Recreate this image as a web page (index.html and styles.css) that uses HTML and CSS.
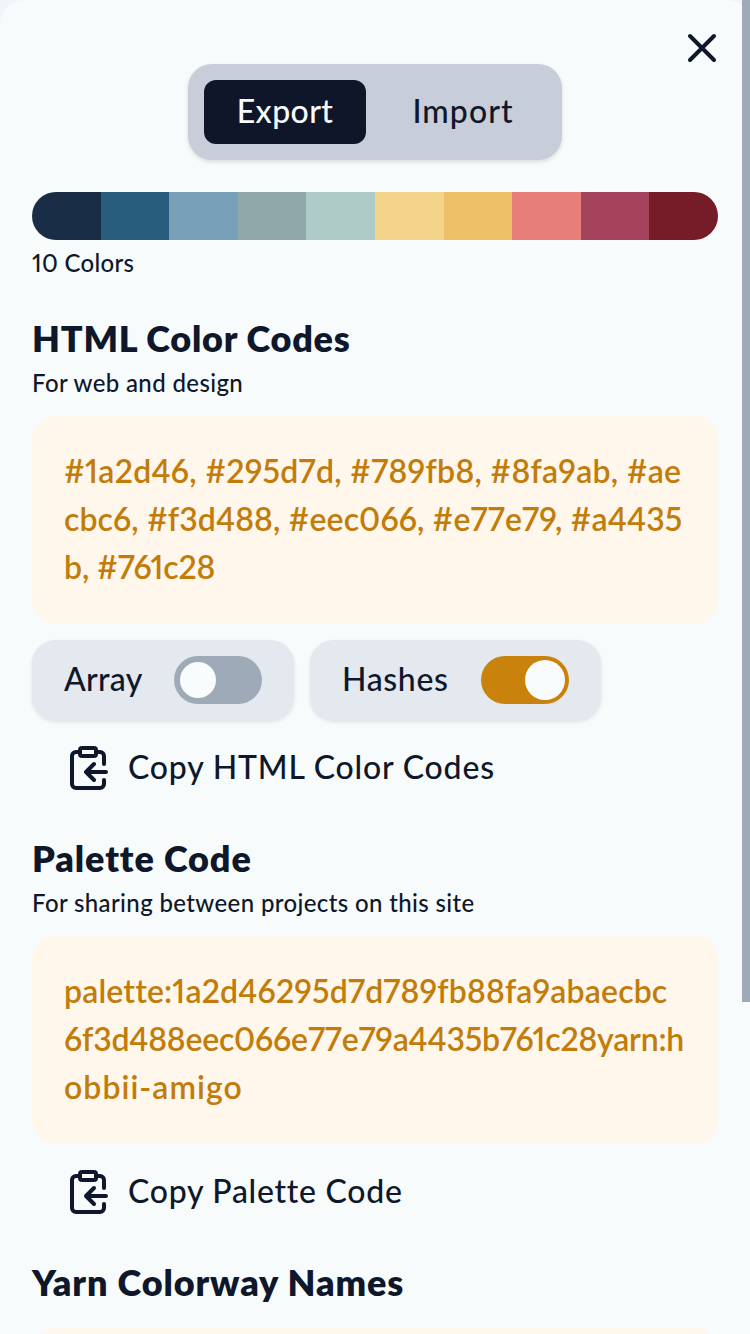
FILE: index.html
```html
<!DOCTYPE html>
<html lang="en">
<head>
<meta charset="utf-8">
<title>Export palette</title>
<link rel="stylesheet" href="styles.css">
</head>
<body>
<main class="dialog">
  <button class="close" aria-label="Close">
    <svg class="icon" viewBox="0 0 24 24"><path d="M18 6 6 18M6 6l12 12"/></svg>
  </button>
  <div class="tabs">
    <button class="tab tab-active">Export</button>
    <button class="tab tab-import">Import</button>
  </div>
  <div class="palette">
    <i class="c1"></i><i class="c2"></i><i class="c3"></i><i class="c4"></i><i class="c5"></i><i class="c6"></i><i class="c7"></i><i class="c8"></i><i class="c9"></i><i class="c10"></i>
  </div>
  <p class="note count">10 Colors</p>

  <section class="section">
    <h2 class="title">HTML Color Codes</h2>
    <p class="note">For web and design</p>
    <div class="code">
      <span class="line h1">#1a2d46, #295d7d, #789fb8, #8fa9ab, #ae</span>
      <span class="line h2">cbc6, #f3d488, #eec066, #e77e79, #a4435</span>
      <span class="line h3">b, #761c28</span>
    </div>
    <div class="options">
      <label class="option option-array"><span class="label array-text">Array</span><span class="switch"><span class="knob"></span></span></label>
      <label class="option option-hashes"><span class="label hashes-text">Hashes</span><span class="switch switch-on"><span class="knob"></span></span></label>
    </div>
    <button class="copy">
      <svg class="icon" viewBox="0 0 24 24"><rect x="8" y="2" width="8" height="4" rx="1"/><path d="M8 4H6a2 2 0 0 0-2 2v14a2 2 0 0 0 2 2h12a2 2 0 0 0 2-2v-2M16 4h2a2 2 0 0 1 2 2v4M21 14H11M15 10l-4 4 4 4"/></svg>
      <span class="label copy-html">Copy HTML Color Codes</span>
    </button>
  </section>

  <section class="section">
    <h2 class="title title-palette">Palette Code</h2>
    <p class="note">For sharing between projects on this site</p>
    <div class="code">
      <span class="line p1">palette:1a2d46295d7d789fb88fa9abaecbc</span>
      <span class="line p2">6f3d488eec066e77e79a4435b761c28yarn:h</span>
      <span class="line p3">obbii-amigo</span>
    </div>
    <button class="copy">
      <svg class="icon" viewBox="0 0 24 24"><rect x="8" y="2" width="8" height="4" rx="1"/><path d="M8 4H6a2 2 0 0 0-2 2v14a2 2 0 0 0 2 2h12a2 2 0 0 0 2-2v-2M16 4h2a2 2 0 0 1 2 2v4M21 14H11M15 10l-4 4 4 4"/></svg>
      <span class="label">Copy Palette Code</span>
    </button>
  </section>

  <section class="section">
    <h2 class="title title-yarn">Yarn Colorway Names</h2>
    <div class="code code-yarn"></div>
  </section>
</main>
<div class="scrollbar"></div>
</body>
</html>
```
FILE: styles.css
```css
* { box-sizing: border-box; }

html, body { height: 100%; overflow: hidden; }

body {
  margin: 0;
  background: #f1f5f9;
  color: #0f172a;
  font: 500 32px/48px Lato, sans-serif;
  font-variant-numeric: proportional-nums;
  font-variant-ligatures: none;
}

button {
  border: 0;
  background: none;
  color: inherit;
  font: inherit;
  letter-spacing: inherit;
}

p, h2 { margin: 0; }

.dialog {
  display: flex;
  flex-direction: column;
  height: 1334px;
  padding: 64px 32px 0;
  overflow: hidden;
  border-radius: 24px 24px 0 0;
  background: #f7fbfc;
}

.dialog > * { flex-shrink: 0; }

.icon {
  display: block;
  width: 48px;
  height: 48px;
  fill: none;
  stroke: currentColor;
  stroke-width: 2;
  stroke-linecap: round;
  stroke-linejoin: round;
}

.close {
  position: absolute;
  top: 24px;
  right: 24px;
  padding: 0;
}

.tabs {
  display: flex;
  gap: 16px;
  align-self: center;
  width: 374px;
  height: 96px;
  padding: 16px;
  border-radius: 24px;
  background: #c7cdd9;
  box-shadow: 0 2px 4px rgba(0, 0, 0, .12);
}

.tab {
  height: 64px;
  padding: 0 0 2px;
  border-radius: 12px;
  flex: 0 0 162px;
  letter-spacing: .39px;
}

.tab-active { background: #10162a; color: #f8fcfd; }
.tab-import { letter-spacing: 1.05px; }

.palette {
  display: flex;
  height: 48px;
  margin-top: 32px;
  overflow: hidden;
  border-radius: 24px;
}

.palette i { flex: 1; }
.c1 { background: #1a2d46; }
.c2 { background: #295d7d; }
.c3 { background: #789fb8; }
.c4 { background: #8fa9ab; }
.c5 { background: #aecbc6; }
.c6 { background: #f3d488; }
.c7 { background: #eec066; }
.c8 { background: #e77e79; }
.c9 { background: #a4435b; }
.c10 { background: #761c28; }

.note {
  height: 32px;
  font-size: 24px;
  line-height: 30px;
  letter-spacing: .37px;
}

.count { margin-top: 8px; letter-spacing: .3px; }

.section { margin-top: 32px; }

.title {
  height: 56px;
  font-size: 36px;
  font-weight: 800;
  line-height: 53px;
  letter-spacing: .75px;
}

.title-palette { letter-spacing: .9px; }
.title-yarn { letter-spacing: .88px; }

.code {
  height: 208px;
  margin-top: 16px;
  padding: 31px 32px 33px;
  border-radius: 24px;
  background: #fff7eb;
  color: #c27c0a;
  font-weight: 600;
}

.line { display: block; white-space: nowrap; }
.h1 { letter-spacing: .25px; }
.h2 { letter-spacing: .09px; }
.h3 { letter-spacing: -.15px; }
.p1 { letter-spacing: .15px; }
.p2 { letter-spacing: -.21px; }
.p3 { letter-spacing: 1.03px; }

.options {
  display: flex;
  gap: 16px;
  margin-top: 16px;
}

.option {
  display: flex;
  align-items: center;
  justify-content: space-between;
  height: 80px;
  padding: 0 32px;
  border-radius: 24px;
  background: #e4e8ef;
  box-shadow: 0 2px 4px rgba(0, 0, 0, .1);
}

.label { padding-bottom: 2px; }
.option-array { width: 262px; }
.option-hashes { width: 291px; }
.array-text { letter-spacing: .3px; }
.hashes-text { letter-spacing: .65px; }

.switch {
  display: flex;
  align-items: center;
  width: 88px;
  height: 48px;
  padding: 0 6px;
  border-radius: 24px;
  background: #9eaab8;
}

.knob {
  width: 36px;
  height: 36px;
  border-radius: 50%;
  background: #f8fcfd;
}

.switch-on {
  justify-content: flex-end;
  padding: 0 4px;
  background: #c9830c;
}

.switch-on .knob { width: 40px; height: 40px; }

.copy {
  display: flex;
  align-items: center;
  gap: 16px;
  height: 64px;
  margin-top: 16px;
  padding: 0 32px;
  letter-spacing: .73px;
}

.copy-html { letter-spacing: .81px; }

.scrollbar {
  position: absolute;
  top: 0;
  right: 0;
  width: 8px;
  height: 1002px;
  background: #9eaab8;
}
```
